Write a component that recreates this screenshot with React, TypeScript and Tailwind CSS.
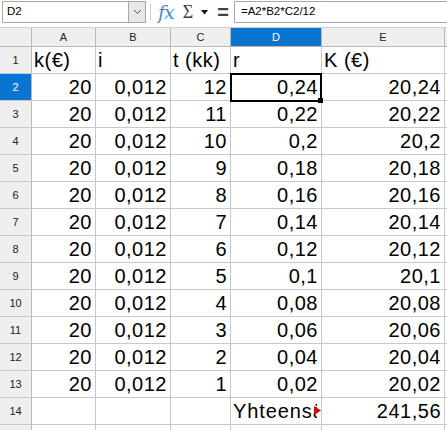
import React from "react";

const font = { fontFamily: '"Liberation Sans", Arial, sans-serif' };

const rows = [
  [12, "0,24", "20,24"],
  [11, "0,22", "20,22"],
  [10, "0,2", "20,2"],
  [9, "0,18", "20,18"],
  [8, "0,16", "20,16"],
  [7, "0,14", "20,14"],
  [6, "0,12", "20,12"],
  [5, "0,1", "20,1"],
  [4, "0,08", "20,08"],
  [3, "0,06", "20,06"],
  [2, "0,04", "20,04"],
  [1, "0,02", "20,02"],
] as const;

function RowHead({ n, active }: { n?: number | string; active?: boolean }) {
  return (
    <div
      className={
        "w-[32px] h-full shrink-0 flex items-center justify-center text-[11px] border-r border-r-[#b8b8b8] " +
        (active ? "bg-[#0a74d1] text-white" : "bg-[#efefef] text-[#222]")
      }
    >
      {n}
    </div>
  );
}

function Cell({
  w,
  children,
  right,
}: {
  w: string;
  children?: React.ReactNode;
  right?: boolean;
}) {
  return (
    <div
      className={
        w +
        " h-full shrink-0 border-r border-r-[#c8c8c8] flex items-end pb-[3px] text-[20px] leading-[20px] tracking-[0.5px] text-black overflow-hidden whitespace-nowrap " +
        (right ? "justify-end pr-[3px]" : "justify-start pl-[2px]")
      }
    >
      {children}
    </div>
  );
}

function Row({
  n,
  cells,
  active,
}: {
  n: number;
  cells: (string | number | null)[];
  active?: boolean;
}) {
  const widths = ["w-[64px]", "w-[75px]", "w-[60px]", "w-[91px]", "w-[123px]"];
  return (
    <div className="flex h-[27px] border-b border-b-[#c8c8c8]">
      <RowHead n={n} active={active} />
      {cells.map((c, i) => (
        <Cell key={i} w={widths[i]} right={typeof c === "number" || (typeof c === "string" && /^[0-9]/.test(c))}>
          {c}
        </Cell>
      ))}
      <div className="flex-1" />
    </div>
  );
}

export default function App() {
  return (
    <div className="w-[447px] h-[430px] overflow-hidden bg-white relative" style={font}>
      {/* toolbar */}
      <div className="h-[28px] flex items-start pt-[1px] pl-[2px] bg-white border-b border-b-[#cfcfcf]">
        <div className="w-[126px] h-[22px] border border-[#a8a8a8] border-r-0 bg-white flex items-center pl-[4px] text-[11.5px] text-black">
          D2
        </div>
        <div className="w-[18px] h-[22px] border border-[#a8a8a8] bg-[#e8e8e8] flex items-center justify-center">
          <svg width="9" height="6" viewBox="0 0 9 6">
            <path d="M1 1 L4.5 4.5 L8 1" fill="none" stroke="#555" strokeWidth="1" />
          </svg>
        </div>
        <div className="w-[1px] h-[16px] bg-[#d0d0d0] ml-[4px] mt-[3px]" />
        <div
          className="ml-[7px] mt-[1px] text-[19px] leading-[20px] italic text-[#3d8ed0]"
          style={{ fontFamily: '"DejaVu Serif", "Liberation Serif", serif' }}
        >
          <span className="tracking-[-1px]">fx</span>
        </div>
        <div className="ml-[9px] mt-[1px] text-[18px] leading-[20px] text-[#444]" style={{ fontFamily: '"Liberation Serif", serif' }}>
          Σ
        </div>
        <svg className="ml-[8px] mt-[9px]" width="7" height="5" viewBox="0 0 7 5">
          <path d="M0 0 L7 0 L3.5 4.5 Z" fill="#111" />
        </svg>
        <div className="ml-[9px] mt-[1px] text-[20px] leading-[20px] text-[#444] font-bold">=</div>
        <div className="ml-[5px] flex-1 h-[22px] border border-[#a8a8a8] border-r-0 bg-white flex items-center pl-[6px] text-[11.5px] text-black">
          =A2*B2*C2/12
        </div>
      </div>

      {/* column headers */}
      <div className="flex h-[19px] bg-[#efefef] border-b border-b-[#b8b8b8] text-[11px] text-[#222]">
        <div className="w-[32px] shrink-0 border-r border-r-[#b8b8b8]" />
        <div className="w-[64px] shrink-0 border-r border-r-[#b8b8b8] flex items-center justify-center">A</div>
        <div className="w-[75px] shrink-0 border-r border-r-[#b8b8b8] flex items-center justify-center">B</div>
        <div className="w-[60px] shrink-0 border-r border-r-[#b8b8b8] flex items-center justify-center">C</div>
        <div className="w-[91px] shrink-0 border-r border-r-[#b8b8b8] flex items-center justify-center bg-[#0a74d1] text-white">
          D
        </div>
        <div className="w-[123px] shrink-0 border-r border-r-[#b8b8b8] flex items-center justify-center">E</div>
        <div className="flex-1" />
      </div>

      {/* rows */}
      <div className="relative">
        <Row n={1} cells={["k(€)", "i", "t (kk)", "r", "K (€)"]} />
        {rows.map((r, idx) => (
          <Row key={idx} n={idx + 2} active={idx === 0} cells={["20", "0,012", String(r[0]), r[1], r[2]]} />
        ))}
        <div className="flex h-[27px] border-b border-b-[#c8c8c8]">
          <RowHead n={14} />
          <Cell w="w-[64px]" />
          <Cell w="w-[75px]" />
          <Cell w="w-[60px]" />
          <div className="w-[91px] h-full shrink-0 border-r border-r-[#c8c8c8] relative">
            <div className="absolute left-[2px] bottom-[3px] w-[84px] overflow-hidden whitespace-nowrap text-[20px] leading-[20px] tracking-[0.9px] text-black">
              Yhteensä
            </div>
            <svg className="absolute right-0 top-[8px]" width="7" height="9" viewBox="0 0 7 9">
              <path d="M0 0 L7 4.5 L0 9 Z" fill="#e00000" />
            </svg>
          </div>
          <Cell w="w-[123px]" right>
            241,56
          </Cell>
          <div className="flex-1" />
        </div>
        <div className="flex h-[27px]">
          <RowHead />
          <Cell w="w-[64px]" />
          <Cell w="w-[75px]" />
          <Cell w="w-[60px]" />
          <Cell w="w-[91px]" />
          <Cell w="w-[123px]" />
        </div>

        {/* selection frame around D2 */}
        <div className="absolute left-[230px] top-[26px] w-[92px] h-[29px] border-2 border-black pointer-events-none" />
        <div className="absolute left-[318px] top-[51px] w-[5px] h-[5px] bg-black" />
      </div>
    </div>
  );
}
